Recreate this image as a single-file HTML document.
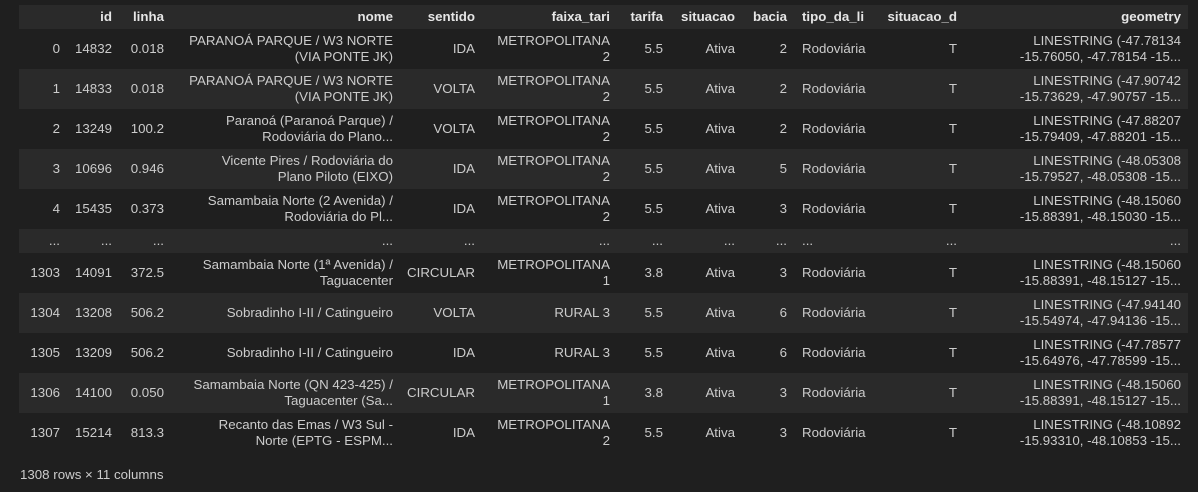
<!DOCTYPE html>
<html><head><meta charset="utf-8"><style>
html,body{margin:0;padding:0;background:#1f1f1f;width:1198px;height:492px;overflow:hidden}
body{font-family:"Liberation Sans","DejaVu Sans",sans-serif;font-size:13.3px;color:#cccccc}
table{position:absolute;left:19px;top:5px;border-collapse:collapse;table-layout:fixed;width:1169px}
td,th{padding:0 7px 0 0;text-align:right;vertical-align:middle;line-height:16px;white-space:nowrap;overflow:hidden}
th{font-weight:bold;color:#e6e6e6;height:24px;background:#2a2a2a}
tr.r td{height:40px}
tr.e td{height:24px}
tr.l td{background:#2a2a2a}
td.t,th.t{text-align:left;padding:0 0 0 8px}
.cap{position:absolute;left:20px;top:467px;font-size:13.3px;color:#cccccc}
</style></head><body>
<table>
<colgroup><col style="width:48px"><col style="width:52px"><col style="width:52px"><col style="width:229px"><col style="width:82px"><col style="width:135px"><col style="width:53px"><col style="width:72px"><col style="width:52px"><col style="width:89px"><col style="width:81px"><col style="width:224px"></colgroup>
<tr><th></th><th>id</th><th>linha</th><th>nome</th><th>sentido</th><th>faixa_tari</th><th>tarifa</th><th>situacao</th><th>bacia</th><th class="t">tipo_da_li</th><th>situacao_d</th><th>geometry</th></tr>
<tr class="r"><td>0</td><td>14832</td><td>0.018</td><td>PARANOÁ PARQUE / W3 NORTE<br>(VIA PONTE JK)</td><td>IDA</td><td>METROPOLITANA<br>2</td><td>5.5</td><td>Ativa</td><td>2</td><td class="t">Rodoviária</td><td>T</td><td>LINESTRING (-47.78134<br>-15.76050, -47.78154 -15...</td></tr>
<tr class="r l"><td>1</td><td>14833</td><td>0.018</td><td>PARANOÁ PARQUE / W3 NORTE<br>(VIA PONTE JK)</td><td>VOLTA</td><td>METROPOLITANA<br>2</td><td>5.5</td><td>Ativa</td><td>2</td><td class="t">Rodoviária</td><td>T</td><td>LINESTRING (-47.90742<br>-15.73629, -47.90757 -15...</td></tr>
<tr class="r"><td>2</td><td>13249</td><td>100.2</td><td>Paranoá (Paranoá Parque) /<br>Rodoviária do Plano...</td><td>VOLTA</td><td>METROPOLITANA<br>2</td><td>5.5</td><td>Ativa</td><td>2</td><td class="t">Rodoviária</td><td>T</td><td>LINESTRING (-47.88207<br>-15.79409, -47.88201 -15...</td></tr>
<tr class="r l"><td>3</td><td>10696</td><td>0.946</td><td>Vicente Pires / Rodoviária do<br>Plano Piloto (EIXO)</td><td>IDA</td><td>METROPOLITANA<br>2</td><td>5.5</td><td>Ativa</td><td>5</td><td class="t">Rodoviária</td><td>T</td><td>LINESTRING (-48.05308<br>-15.79527, -48.05308 -15...</td></tr>
<tr class="r"><td>4</td><td>15435</td><td>0.373</td><td>Samambaia Norte (2 Avenida) /<br>Rodoviária do Pl...</td><td>IDA</td><td>METROPOLITANA<br>2</td><td>5.5</td><td>Ativa</td><td>3</td><td class="t">Rodoviária</td><td>T</td><td>LINESTRING (-48.15060<br>-15.88391, -48.15030 -15...</td></tr>
<tr class="e l"><td>...</td><td>...</td><td>...</td><td>...</td><td>...</td><td>...</td><td>...</td><td>...</td><td>...</td><td class="t">...</td><td>...</td><td>...</td></tr>
<tr class="r"><td>1303</td><td>14091</td><td>372.5</td><td>Samambaia Norte (1ª Avenida) /<br>Taguacenter</td><td>CIRCULAR</td><td>METROPOLITANA<br>1</td><td>3.8</td><td>Ativa</td><td>3</td><td class="t">Rodoviária</td><td>T</td><td>LINESTRING (-48.15060<br>-15.88391, -48.15127 -15...</td></tr>
<tr class="r l"><td>1304</td><td>13208</td><td>506.2</td><td>Sobradinho I-II / Catingueiro</td><td>VOLTA</td><td>RURAL 3</td><td>5.5</td><td>Ativa</td><td>6</td><td class="t">Rodoviária</td><td>T</td><td>LINESTRING (-47.94140<br>-15.54974, -47.94136 -15...</td></tr>
<tr class="r"><td>1305</td><td>13209</td><td>506.2</td><td>Sobradinho I-II / Catingueiro</td><td>IDA</td><td>RURAL 3</td><td>5.5</td><td>Ativa</td><td>6</td><td class="t">Rodoviária</td><td>T</td><td>LINESTRING (-47.78577<br>-15.64976, -47.78599 -15...</td></tr>
<tr class="r l"><td>1306</td><td>14100</td><td>0.050</td><td>Samambaia Norte (QN 423-425) /<br>Taguacenter (Sa...</td><td>CIRCULAR</td><td>METROPOLITANA<br>1</td><td>3.8</td><td>Ativa</td><td>3</td><td class="t">Rodoviária</td><td>T</td><td>LINESTRING (-48.15060<br>-15.88391, -48.15127 -15...</td></tr>
<tr class="r"><td>1307</td><td>15214</td><td>813.3</td><td>Recanto das Emas / W3 Sul -<br>Norte (EPTG - ESPM...</td><td>IDA</td><td>METROPOLITANA<br>2</td><td>5.5</td><td>Ativa</td><td>3</td><td class="t">Rodoviária</td><td>T</td><td>LINESTRING (-48.10892<br>-15.93310, -48.10853 -15...</td></tr>
</table>
<div class="cap">1308 rows × 11 columns</div>
</body></html>
